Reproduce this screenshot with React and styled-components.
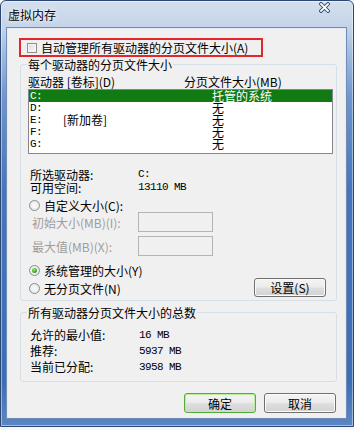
import React from "react";
import styled, { createGlobalStyle } from "styled-components";

const Global = createGlobalStyle`
  html, body { margin: 0; padding: 0; background: #f4f6f9; }
  body {
    font-family: "Noto Sans CJK SC", "Noto Sans", sans-serif;
    font-size: 12px;
    color: #000;
  }
  * { box-sizing: border-box; }
`;

const Window = styled.div`
  width: 354px;
  height: 427px;
  border: 1px solid #2b4772;
  border-radius: 6px 6px 0 0;
  padding: 0 7px 8px 6px;
  display: flex;
  flex-direction: column;
  background: linear-gradient(
    180deg,
    #d3dfed 0px,
    #c4d4e8 27px,
    #a4bde0 50px,
    #6c93cc 100px,
    #4675bb 190px,
    #3d6db5 380px,
    #5b86c4 100%
  );
  box-shadow: inset 0 0 0 1px rgba(255, 255, 255, 0.45);
`;

const TitleBar = styled.div`
  height: 27px;
  display: flex;
  justify-content: space-between;
  align-items: center;
  padding-left: 1px;
`;

const Title = styled.span`
  font-size: 12px;
  line-height: 13px;
  text-shadow: 0 0 6px rgba(255, 255, 255, 0.95), 0 0 2px rgba(255, 255, 255, 0.9);
`;

const CloseIcon = styled.svg`
  align-self: flex-start;
  margin-top: 1px;
  margin-right: 16px;
`;

const Client = styled.div`
  height: 390px;
  background: #f0f0f0;
  border: 1px solid #e4ebf4;
  box-shadow: 0 0 0 1px #6f8db9;
  padding: 9px 8px 0 12px;
  display: flex;
  flex-direction: column;
`;

const AutoBox = styled.label`
  width: 244px;
  height: 19px;
  margin-left: -1px;
  border: 2px solid #e3262c;
  display: flex;
  align-items: center;
  padding-left: 6px;
  line-height: 13px;
`;

const CheckBox = styled.span`
  width: 10px;
  height: 10px;
  border: 1px solid #8e8f8f;
  background: linear-gradient(135deg, #d9d9d9 0%, #f3f3f3 70%, #fbfbfb 100%);
  box-shadow: inset 0 0 0 1px #f6f6f6;
  margin-right: 4px;
  flex: none;
`;

const Group = styled.fieldset`
  margin: ${(p) => p.$mt}px 0 0 0;
  width: 317px;
  min-width: 0;
  border: 1px solid #d5dfe5;
  border-radius: 3px;
  padding: ${(p) => p.$pt}px 3px ${(p) => p.$pb}px 7px;
`;

const Legend = styled.legend`
  padding: 0 1px;
  margin-left: -1px;
  font-size: 12px;
  line-height: 13px;
`;

const ColHeader = styled.div`
  display: grid;
  grid-template-columns: 156px 1fr;
  margin-top: 4px;
  line-height: 13px;
  white-space: pre;
`;

const ListBox = styled.div`
  margin-top: 1px;
  height: 65px;
  border: 1px solid #828790;
  background: #fff;
`;

const DriveRow = styled.div`
  display: grid;
  grid-template-columns: 33px 149px 1fr;
  height: 12px;
  line-height: 12px;
  padding-left: 1px;
  background: ${(p) => (p.$selected ? "#127a12" : "transparent")};
  color: ${(p) => (p.$selected ? "#fff" : "#000")};
  white-space: pre;
`;

const Mono = styled.span`
  font-family: "Liberation Mono", "DejaVu Sans Mono", monospace;
  font-size: 11px;
  letter-spacing: -0.6px;
`;

const InfoBlock = styled.div`
  margin-top: ${(p) => p.$mt}px;
  padding-left: 2px;
`;

const InfoRow = styled.div`
  display: grid;
  grid-template-columns: ${(p) => p.$col}px 1fr;
  line-height: ${(p) => p.$lh}px;
  height: ${(p) => p.$lh}px;
`;

const RadioRow = styled.label`
  display: flex;
  align-items: center;
  height: ${(p) => p.$h}px;
  margin-top: ${(p) => p.$mt || 0}px;
  padding-left: 1px;
  line-height: 13px;
`;

const Radio = styled.span`
  position: relative;
  width: 11px;
  height: 11px;
  border-radius: 50%;
  border: 1px solid #8c8e8e;
  background: radial-gradient(circle at 50% 50%, #f6f6f6 0 35%, #d9d9d9 100%);
  margin-right: 4px;
  flex: none;
  &::after {
    content: "";
    display: ${(p) => (p.$checked ? "block" : "none")};
    position: absolute;
    left: 2px;
    top: 2px;
    width: 5px;
    height: 5px;
    border-radius: 50%;
    background: radial-gradient(circle at 40% 35%, #a8ec7e 0%, #4fb634 45%, #1f7f15 100%);
  }
`;

const FieldRow = styled.div`
  display: grid;
  grid-template-columns: 106px 75px;
  align-items: center;
  height: 20px;
  padding-left: 4px;
  margin-top: ${(p) => p.$mt}px;
  color: #9d9d9d;
  line-height: 13px;
`;

const TextInput = styled.div`
  height: 20px;
  border: 1px solid #b4b4b4;
  background: #f0f0f0;
`;

const BottomRow = styled.div`
  display: flex;
  justify-content: space-between;
  align-items: flex-end;
  margin-top: 5px;
`;

const RadioColumn = styled.div`
  display: flex;
  flex-direction: column;
`;

const Button = styled.button`
  width: 72px;
  height: ${(p) => p.$h}px;
  padding: 0;
  margin: 0;
  font-family: "Noto Sans CJK SC", "Noto Sans", sans-serif;
  font-size: 12px;
  line-height: 13px;
  color: #000;
  border-radius: 3px;
  border: 1px solid ${(p) => (p.$default ? "#52ad38" : "#707070")};
  box-shadow: inset 0 0 0 1px ${(p) => (p.$default ? "#b9eda0" : "#fbfbfb")};
  background: linear-gradient(180deg, #f4f4f4 0%, #ececec 48%, #dfdfdf 52%, #d2d2d2 100%);
  margin-right: ${(p) => p.$mr || 0}px;
`;

const ButtonRow = styled.div`
  display: flex;
  justify-content: flex-end;
  gap: 8px;
  margin-top: 11px;
  padding-right: 1px;
`;

const drives = [
  { d: "C:", label: "", size: "托管的系统", selected: true },
  { d: "D:", label: "", size: "无" },
  { d: "E:", label: "[新加卷]", size: "无" },
  { d: "F:", label: "", size: "无" },
  { d: "G:", label: "", size: "无" },
];

export default function App() {
  return (
    <>
      <Global />
      <Window>
        <TitleBar>
          <Title>虚拟内存</Title>
          <CloseIcon width="11" height="11" viewBox="0 0 11 11">
            <path d="M2 2 L9 9 M9 2 L2 9" stroke="#233f6b" strokeWidth="3.6" strokeLinecap="square" />
            <path d="M2 2 L9 9 M9 2 L2 9" stroke="#ffffff" strokeWidth="1.9" strokeLinecap="square" />
          </CloseIcon>
        </TitleBar>
        <Client>
          <AutoBox>
            <CheckBox />
            自动管理所有驱动器的分页文件大小(A)
          </AutoBox>

          <Group $mt={1} $pt={0} $pb={3}>
            <Legend>每个驱动器的分页文件大小</Legend>
            <ColHeader>
              <span>驱动器 [卷标](D)</span>
              <span>分页文件大小(MB)</span>
            </ColHeader>
            <ListBox>
              {drives.map((r) => (
                <DriveRow key={r.d} $selected={r.selected}>
                  <Mono>{r.d}</Mono>
                  <span>{r.label}</span>
                  <span>{r.size}</span>
                </DriveRow>
              ))}
            </ListBox>
            <InfoBlock $mt={14}>
              <InfoRow $col={108} $lh={13}>
                <span>所选驱动器:</span>
                <Mono>C:</Mono>
              </InfoRow>
              <InfoRow $col={108} $lh={13}>
                <span>可用空间:</span>
                <Mono>13110 MB</Mono>
              </InfoRow>
            </InfoBlock>
            <RadioRow $h={13} $mt={5}>
              <Radio />
              自定义大小(C):
            </RadioRow>
            <FieldRow $mt={0}>
              <span>初始大小(MB)(I):</span>
              <TextInput />
            </FieldRow>
            <FieldRow $mt={4}>
              <span>最大值(MB)(X):</span>
              <TextInput />
            </FieldRow>
            <BottomRow>
              <RadioColumn>
                <RadioRow $h={18}>
                  <Radio $checked />
                  系统管理的大小(Y)
                </RadioRow>
                <RadioRow $h={18}>
                  <Radio />
                  无分页文件(N)
                </RadioRow>
              </RadioColumn>
              <Button $h={19} $mr={7}>设置(S)</Button>
            </BottomRow>
          </Group>

          <Group $mt={5} $pt={8} $pb={6}>
            <Legend>所有驱动器分页文件大小的总数</Legend>
            <InfoBlock $mt={0}>
              <InfoRow $col={109} $lh={16}>
                <span>允许的最小值:</span>
                <Mono>16 MB</Mono>
              </InfoRow>
              <InfoRow $col={109} $lh={16}>
                <span>推荐:</span>
                <Mono>5937 MB</Mono>
              </InfoRow>
              <InfoRow $col={109} $lh={16}>
                <span>当前已分配:</span>
                <Mono>3958 MB</Mono>
              </InfoRow>
            </InfoBlock>
          </Group>

          <ButtonRow>
            <Button $h={20} $default>确定</Button>
            <Button $h={20}>取消</Button>
          </ButtonRow>
        </Client>
      </Window>
    </>
  );
}
